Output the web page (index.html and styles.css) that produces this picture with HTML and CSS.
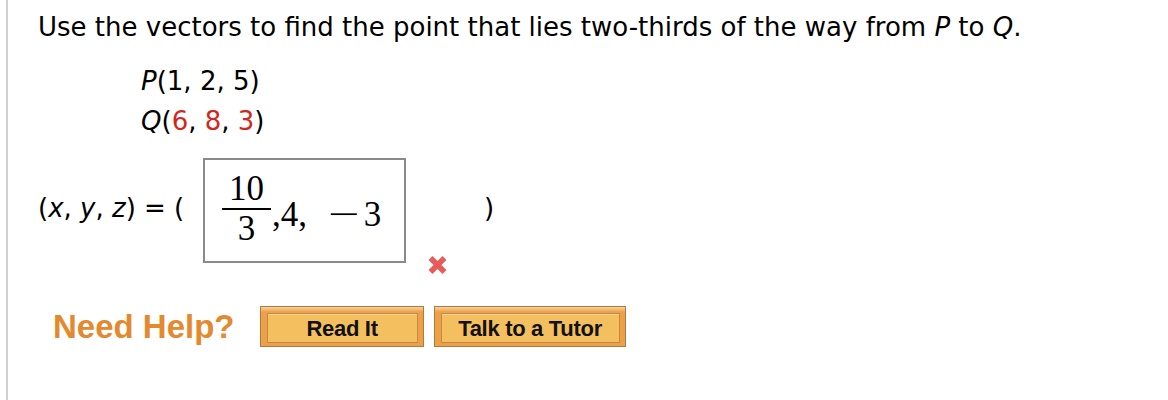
FILE: index.html
```html
<!DOCTYPE html>
<html>
<head>
<meta charset="utf-8">
<link rel="stylesheet" href="styles.css">
</head>
<body>
<div class="page">
  <p class="question">Use the vectors to find the point that lies two-thirds of the way from <i>P</i> to <i>Q</i>.</p>
  <div class="points">
    <div class="pt"><i>P</i>(1, 2, 5)</div>
    <div class="pt"><i>Q</i>(<span class="red">6</span>, <span class="red">8</span>, <span class="red">3</span>)</div>
  </div>
  <div class="answer-row">
    <span class="lhs">(<i>x</i>, <i>y</i>, <i>z</i>) = (</span>
    <div class="answer-box">
      <span class="frac"><span class="num">10</span><span class="den">3</span></span><span class="rest">,4,<span class="op">&minus;</span>3</span>
    </div>
    <div class="mark">
      <svg width="23" height="24" viewBox="0 0 23 24">
        <path d="M4.5 5 L18.5 19 M18.5 5 L4.5 19" stroke="#e85b5b" stroke-width="5.5" stroke-linecap="butt"/>
      </svg>
    </div>
    <span class="close">)</span>
  </div>
  <div class="help">
    <span class="need">Need Help?</span>
    <span class="btn btn-read"><span class="inner">Read It</span></span>
    <span class="btn btn-tutor"><span class="inner">Talk to a Tutor</span></span>
  </div>
</div>
</body>
</html>
```
FILE: styles.css
```css
html, body {
  margin: 0;
  padding: 0;
  background: #fff;
}
body {
  font-family: "DejaVu Sans", Verdana, sans-serif;
  color: #000;
}
.page {
  margin-left: 6px;
  border-left: 2px solid #d0d0d0;
  height: 400px;
  box-sizing: border-box;
  padding: 12px 0 0 30px;
}
.question {
  margin: 0;
  font-size: 26px;
  line-height: 30px;
}
.points {
  margin: 19px 0 0 103px;
  font-size: 26px;
  line-height: 40px;
}
.red {
  color: #d0281e;
}
.answer-row {
  display: flex;
  align-items: flex-start;
  margin-top: 17px;
  font-size: 26px;
  line-height: 30px;
}
.lhs {
  margin-top: 35px;
  width: 165px;
}
.answer-box {
  width: 203px;
  height: 105px;
  border: 2px solid #8a8a8a;
  display: flex;
  align-items: center;
  padding-left: 17px;
  box-sizing: border-box;
  font-family: "Liberation Serif", "DejaVu Serif", serif;
  font-size: 35px;
  line-height: 28px;
}
.frac {
  display: inline-flex;
  flex-direction: column;
  align-items: center;
  margin-top: -4px;
}
.num {
  padding: 0 7px 5px;
  border-bottom: 2px solid #000;
}
.den {
  padding-top: 5px;
}
.rest {
  display: inline-flex;
  margin-top: 8px;
  margin-left: 1px;
}
.op {
  margin: 0 10px 0 27px;
  display: inline-block;
  transform: scaleX(1.6);
}
.mark {
  margin: 95px 0 0 20px;
  width: 23px;
  height: 24px;
}
.mark svg {
  display: block;
  filter: blur(0.4px);
}
.close {
  margin: 35px 0 0 35px;
}
.help {
  display: flex;
  align-items: center;
  margin: 29px 0 0 15px;
}
.need {
  font-family: "Liberation Sans", Arial, sans-serif;
  font-weight: bold;
  font-size: 33px;
  color: #e38a2e;
  margin-right: 25px;
}
.btn {
  display: inline-flex;
  box-sizing: border-box;
  height: 41px;
  border: 1px solid #b07a3a;
  background: linear-gradient(#f7d3a0 0, #eda048 5px, #eda048 100%);
  padding: 6px 5px 3px 6px;
  margin-right: 10px;
}
.btn-read { width: 164px; }
.btn-tutor { width: 192px; }
.inner {
  flex: 1;
  display: flex;
  align-items: center;
  justify-content: center;
  padding-top: 2px;
  background: #f4bf5e;
  border: 1px solid #bf8a4a;
  box-shadow: inset 0 1px 0 #f8d58e;
  font-family: "Liberation Sans", Arial, sans-serif;
  font-weight: bold;
  font-size: 22px;
  letter-spacing: -0.3px;
  color: #111;
}
```
